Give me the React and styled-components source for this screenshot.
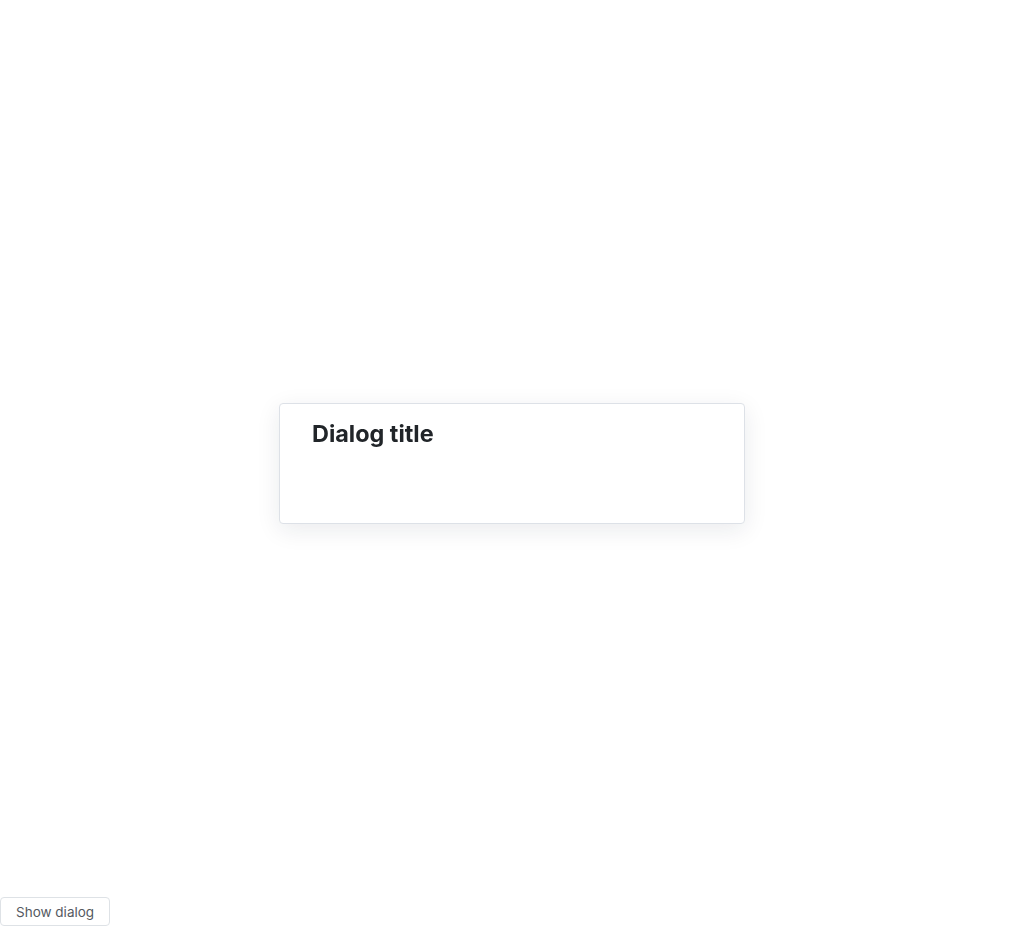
import styled, { createGlobalStyle } from "styled-components";

const GlobalStyle = createGlobalStyle`
  html, body {
    margin: 0;
    padding: 0;
    background: #fff;
    font-family: Inter, "Noto Sans", sans-serif;
  }
`;

const Page = styled.div`
  min-height: 100vh;
  display: flex;
  flex-direction: column;
  justify-content: flex-end;
  align-items: flex-start;
`;

const ShowButton = styled.button`
  height: 29px;
  padding: 0 15px;
  font-family: Inter, "Noto Sans", sans-serif;
  font-size: 13.5px;
  color: #555a61;
  background: #fff;
  border: 1px solid #dee2e6;
  border-radius: 4px;
  cursor: pointer;
`;

const Overlay = styled.div`
  position: fixed;
  inset: 0;
  display: flex;
  align-items: center;
  justify-content: center;
`;

const Dialog = styled.div`
  box-sizing: border-box;
  width: 466px;
  min-height: 121px;
  padding: 16px 32px;
  background: #fff;
  border: 1px solid #dde1e7;
  border-radius: 4px;
  box-shadow: 0 6px 24px rgba(20, 30, 50, 0.09);
`;

const Title = styled.h2`
  margin: 0;
  font-size: 23.4px;
  font-weight: 700;
  line-height: 28px;
  color: #212529;
`;

export default function App() {
  return (
    <>
      <GlobalStyle />
      <Page>
        <ShowButton>Show dialog</ShowButton>
      </Page>
      <Overlay>
        <Dialog role="dialog">
          <Title>Dialog title</Title>
        </Dialog>
      </Overlay>
    </>
  );
}
